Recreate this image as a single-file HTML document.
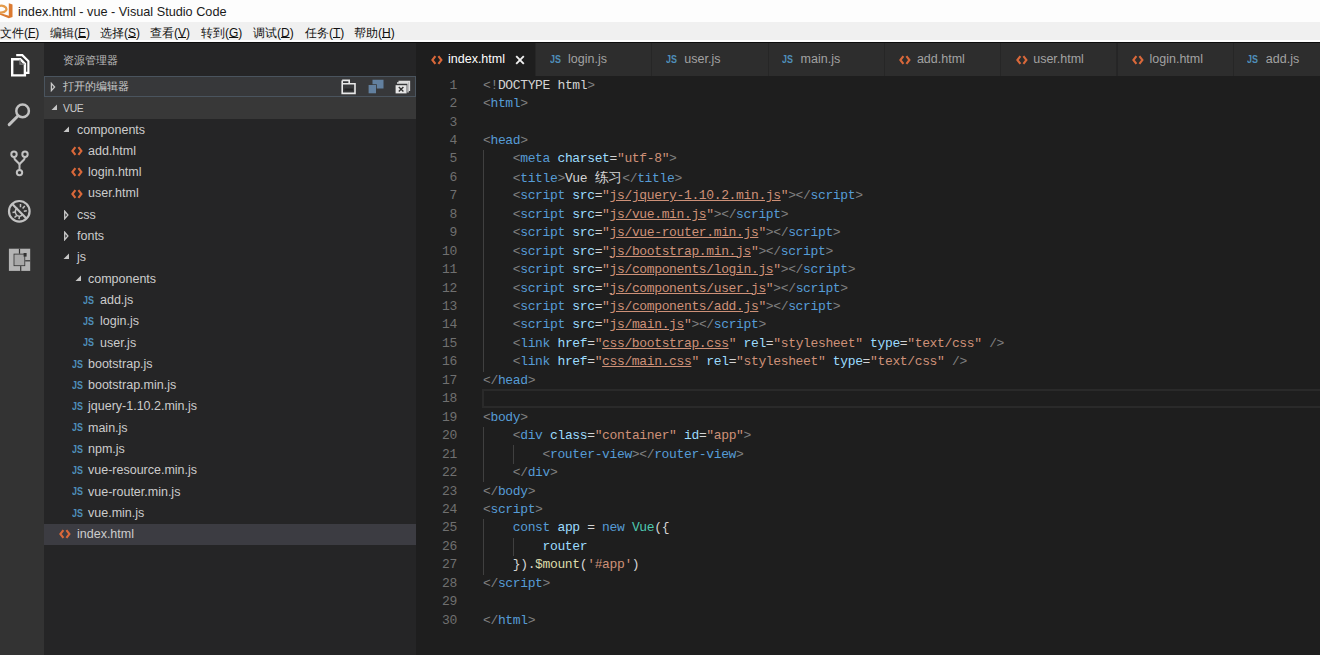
<!DOCTYPE html>
<html><head><meta charset="utf-8">
<style>
*{margin:0;padding:0;box-sizing:border-box}
html,body{width:1320px;height:655px;overflow:hidden;background:#1e1e1e;font-family:"Liberation Sans",sans-serif}
.abs{position:absolute}
#title{left:0;top:0;width:1320px;height:22px;background:#fdfdfd;color:#222}
#title .t{left:18px;top:4.5px;font-size:12.7px;white-space:nowrap;color:#1a1a1a}
#menu{left:0;top:22px;width:1320px;height:20px;background:#f0f0f0;color:#111;font-size:12px}
#menu span{position:absolute;top:3px;white-space:nowrap}
#act{left:0;top:42px;width:44px;height:613px;background:#333333}
#side{left:44px;top:42px;width:372px;height:613px;background:#252526;color:#cccccc;font-size:12.5px}
.lbl{white-space:nowrap;font-size:12.5px;color:#cccccc}
.jsi{font-size:10.5px;line-height:10px;font-weight:bold;color:#4f8fba;transform:scaleX(0.85);transform-origin:0 0}
#editor{left:416px;top:42px;width:904px;height:613px;background:#1e1e1e}
#tabs{left:0;top:0;width:904px;height:34px;background:#252526}
.tab{position:absolute;top:0;height:34px;background:#2d2d2d;color:#a0a0a0;font-size:12.5px;white-space:nowrap}
.tab .n{position:absolute;top:10px}
#code{left:0;top:34px;width:904px;height:579px;font-family:"Liberation Mono",monospace;font-size:13px;letter-spacing:-0.36px;color:#d4d4d4}
.ln{position:absolute;left:0;width:41px;text-align:right;color:#707070;line-height:18px}
.cl{position:absolute;left:67px;white-space:pre;line-height:18px}
.b{color:#808080}.tg{color:#569cd6}.at{color:#9cdcfe}.st{color:#ce9178}.kw{color:#569cd6}.cls{color:#4ec9b0}.fn{color:#dcdcaa}
.u{text-decoration:underline}
#menu u{text-underline-offset:0px;text-decoration-thickness:1px}

</style></head><body>
<div id="title" class="abs">
<svg class="abs" style="left:0;top:0" width="16" height="22" viewBox="0 0 16 22"><path d="M8.8 3.3 L12.5 4.5 V17 L8.8 18.2 L0 14.8 V13 L8.8 15.8 Z" fill="#dc7a30"/><path d="M-1 6 C3 5 6.5 7 6.5 9.2 C6.5 11.5 3 12.8 -1 12.5" fill="none" stroke="#e49a4a" stroke-width="2.3"/></svg>
<div class="t abs">index.html - vue - Visual Studio Code</div></div>
<div id="menu" class="abs">
<span style="left:0">文件(<u>F</u>)</span><span style="left:50px">编辑(<u>E</u>)</span><span style="left:100px">选择(<u>S</u>)</span><span style="left:150px">查看(<u>V</u>)</span><span style="left:201px">转到(<u>G</u>)</span><span style="left:253px">调试(<u>D</u>)</span><span style="left:305px">任务(<u>T</u>)</span><span style="left:354px">帮助(<u>H</u>)</span>
</div>
<div id="act" class="abs"><svg class="abs" style="left:0;top:0" width="44" height="240" viewBox="0 0 44 240">
<g fill="none" stroke="#ffffff" stroke-linejoin="miter">
<path d="M16.2 13.1 H22.3 L28.4 19.2 V30.9 H26" stroke-width="2.2"/>
<path d="M12.2 17.2 H20.3 L24.9 21.8 V33.4 H12.2 Z" stroke-width="2.4"/>
<path d="M20 17.5 V22.2 H24.6" stroke-width="1.2" stroke="#888"/>
</g>
<g fill="none" stroke="#c2c2c2" stroke-linecap="round">
<circle cx="22.6" cy="68.9" r="6.3" stroke-width="2.5"/>
<path d="M9.2 82.6 L17.6 74.2" stroke-width="3"/>
</g>
<g fill="none" stroke="#c2c2c2" stroke-width="2">
<circle cx="14" cy="112.3" r="2.7"/>
<circle cx="25" cy="112.3" r="2.7"/>
<circle cx="19.5" cy="130.6" r="2.7"/>
<path d="M14 115 C14 119 19.5 120 19.5 123 V127.9 M25 115 C25 119 19.5 120 19.5 123"/>
</g>
<g fill="none" stroke="#c2c2c2">
<circle cx="19.3" cy="169.3" r="10.3" stroke-width="2.2"/>
<path d="M12.5 162.3 L26.4 176.4" stroke-width="2.2"/>
<path d="M17.5 166.2 C15 167 14.5 171 16.5 173 C18.5 175 21.5 174.5 22.5 172.2" stroke-width="1.6"/>
<path d="M20.5 162 V165.3 M24.8 164 L22.6 166.5 M26.8 168.8 L23.8 169.3 M12.5 170.5 L15.2 170 M14.5 175.5 L16.6 173.6 M19 177.2 L19.4 174.6" stroke-width="1.5"/>
</g>
<g>
<rect x="8.9" y="206.7" width="21.3" height="22.2" fill="#b4b4b4"/>
<rect x="13.6" y="211.7" width="11.6" height="12.4" fill="#333333"/>
<rect x="14.4" y="212.5" width="10" height="10.8" fill="#a8a8a8"/>
<rect x="18.9" y="206.7" width="1.2" height="5" fill="#333333"/>
<rect x="20.1" y="224.1" width="1.2" height="4.8" fill="#333333"/>
<rect x="25.2" y="218.2" width="5" height="1.2" fill="#333333"/>
<rect x="23.6" y="211" width="3" height="3.6" fill="#333333"/>
</g>
</svg></div>
<div id="side" class="abs"><div class="abs" style="left:19px;top:11.5px;font-size:10.8px;color:#bbbbbb">资源管理器</div><div class="abs" style="left:0;top:34px;width:372px;height:21px;background:#37383a;border:1px solid #4a545e"></div><svg class="abs" style="left:6px;top:39.5px" width="7" height="10" viewBox="0 0 7 10"><path d="M1.4 1.4 L4.6 5 L1.4 8.6 Z" fill="none" stroke="#c8c8c8" stroke-width="1.3"/></svg><div class="abs" style="left:19px;top:37.5px;font-size:10.8px;color:#cccccc">打开的编辑器</div><svg class="abs" style="left:290px;top:34px" width="82" height="22" viewBox="0 0 82 22">
<g fill="none" stroke="#e8e8e8" stroke-width="1.6">
<path d="M8.2 4.4 H15.2 V7.8 M8.2 4.4 V17.4 H21 V7.8 H8.2"/>
<path d="M10.5 13.5 H19" stroke="#222" stroke-width="2"/>
</g>
<g fill="#62809f">
<path d="M34.6 9 H42 V17.3 H34.6 Z"/><path d="M38.5 3.8 H49.5 V12.5 H42.8 V8.2 H38.5 Z"/>
</g>
<g>
<path d="M64.5 5.5 H75.5 V15 M63 7 H74 V16.5" fill="none" stroke="#dddddd" stroke-width="1.3"/>
<rect x="61.6" y="9.2" width="11" height="8.2" fill="#e6e6e6"/>
<path d="M64.8 11 L69.4 15.6 M69.4 11 L64.8 15.6" stroke="#333" stroke-width="1.4"/>
</g>
</svg><div class="abs" style="left:0;top:55px;width:372px;height:22px;background:#383838"></div><svg class="abs" style="left:6.8px;top:62.3px" width="7" height="7" viewBox="0 0 7 7"><path d="M6 0.5 L6 6 L0.5 6 Z" fill="#c5c5c5"/></svg><div class="abs" style="left:19px;top:61px;font-size:10.4px;letter-spacing:-0.3px;color:#cccccc">VUE</div><svg class="abs" style="left:18.8px;top:83.6px" width="7" height="7" viewBox="0 0 7 7"><path d="M6 0.5 L6 6 L0.5 6 Z" fill="#c5c5c5"/></svg><div class="abs lbl" style="left:33px;top:80.50px">components</div><svg class="abs" style="left:27px;top:104.0px" width="12" height="10" viewBox="0 0 12 10"><path d="M4.4 1.2 L1.4 5 L4.4 8.8 M7.4 1.2 L10.4 5 L7.4 8.8" fill="none" stroke="#d9683a" stroke-width="2.1"/></svg><div class="abs lbl" style="left:44px;top:101.80px">add.html</div><svg class="abs" style="left:27px;top:125.3px" width="12" height="10" viewBox="0 0 12 10"><path d="M4.4 1.2 L1.4 5 L4.4 8.8 M7.4 1.2 L10.4 5 L7.4 8.8" fill="none" stroke="#d9683a" stroke-width="2.1"/></svg><div class="abs lbl" style="left:44px;top:123.10px">login.html</div><svg class="abs" style="left:27px;top:146.6px" width="12" height="10" viewBox="0 0 12 10"><path d="M4.4 1.2 L1.4 5 L4.4 8.8 M7.4 1.2 L10.4 5 L7.4 8.8" fill="none" stroke="#d9683a" stroke-width="2.1"/></svg><div class="abs lbl" style="left:44px;top:144.40px">user.html</div><svg class="abs" style="left:19px;top:167.5px" width="7" height="10" viewBox="0 0 7 10"><path d="M1.7 1.3 L4.9 5 L1.7 8.7 Z" fill="none" stroke="#c8c8c8" stroke-width="1.3"/></svg><div class="abs lbl" style="left:33px;top:165.70px">css</div><svg class="abs" style="left:19px;top:188.8px" width="7" height="10" viewBox="0 0 7 10"><path d="M1.7 1.3 L4.9 5 L1.7 8.7 Z" fill="none" stroke="#c8c8c8" stroke-width="1.3"/></svg><div class="abs lbl" style="left:33px;top:187.00px">fonts</div><svg class="abs" style="left:18.8px;top:211.4px" width="7" height="7" viewBox="0 0 7 7"><path d="M6 0.5 L6 6 L0.5 6 Z" fill="#c5c5c5"/></svg><div class="abs lbl" style="left:33px;top:208.30px">js</div><svg class="abs" style="left:30.6px;top:232.7px" width="7" height="7" viewBox="0 0 7 7"><path d="M6 0.5 L6 6 L0.5 6 Z" fill="#c5c5c5"/></svg><div class="abs lbl" style="left:44px;top:229.60px">components</div><div class="abs jsi" style="left:38.9px;top:252.6px">JS</div><div class="abs lbl" style="left:56px;top:250.90px">add.js</div><div class="abs jsi" style="left:38.9px;top:273.90000000000003px">JS</div><div class="abs lbl" style="left:56px;top:272.20px">login.js</div><div class="abs jsi" style="left:38.9px;top:295.2px">JS</div><div class="abs lbl" style="left:56px;top:293.50px">user.js</div><div class="abs jsi" style="left:27.5px;top:316.5px">JS</div><div class="abs lbl" style="left:44px;top:314.80px">bootstrap.js</div><div class="abs jsi" style="left:27.5px;top:337.8px">JS</div><div class="abs lbl" style="left:44px;top:336.10px">bootstrap.min.js</div><div class="abs jsi" style="left:27.5px;top:359.1px">JS</div><div class="abs lbl" style="left:44px;top:357.40px">jquery-1.10.2.min.js</div><div class="abs jsi" style="left:27.5px;top:380.4px">JS</div><div class="abs lbl" style="left:44px;top:378.70px">main.js</div><div class="abs jsi" style="left:27.5px;top:401.7px">JS</div><div class="abs lbl" style="left:44px;top:400.00px">npm.js</div><div class="abs jsi" style="left:27.5px;top:423.0px">JS</div><div class="abs lbl" style="left:44px;top:421.30px">vue-resource.min.js</div><div class="abs jsi" style="left:27.5px;top:444.3px">JS</div><div class="abs lbl" style="left:44px;top:442.60px">vue-router.min.js</div><div class="abs jsi" style="left:27.5px;top:465.6px">JS</div><div class="abs lbl" style="left:44px;top:463.90px">vue.min.js</div><div class="abs" style="left:0;top:481.70px;width:372px;height:21.3px;background:#3c3c42"></div><svg class="abs" style="left:14.7px;top:487.4px" width="12" height="10" viewBox="0 0 12 10"><path d="M4.4 1.2 L1.4 5 L4.4 8.8 M7.4 1.2 L10.4 5 L7.4 8.8" fill="none" stroke="#d9683a" stroke-width="2.1"/></svg><div class="abs lbl" style="left:33px;top:485.20px">index.html</div></div>
<div class="abs" style="left:0;top:40px;width:1320px;height:2px;background:#fdfdfd;z-index:5"></div><div class="abs" style="left:0;top:42px;width:1320px;height:1px;background:#0c0c0c;z-index:5"></div>
<div id="editor" class="abs">
<div id="tabs" class="abs"><div class="tab" style="left:0.0px;width:120.0px;background:#1e1e1e;color:#ffffff;border-right:1px solid #262626"><svg class="abs" style="left:14.5px;top:12.7px" width="12" height="10" viewBox="0 0 12 10"><path d="M4.4 1.2 L1.4 5 L4.4 8.8 M7.4 1.2 L10.4 5 L7.4 8.8" fill="none" stroke="#d9683a" stroke-width="2.1"/></svg><div class="n" style="left:32px">index.html</div><svg class="abs" style="left:99px;top:12.5px" width="10" height="10" viewBox="0 0 10 10"><path d="M1.2 1.2 L8.8 8.8 M8.8 1.2 L1.2 8.8" stroke="#f0f0f0" stroke-width="1.9"/></svg></div><div class="tab" style="left:120.0px;width:116.3px;background:#2d2d2d;color:#a2a2a2;border-right:1px solid #262626"><div class="abs jsi" style="left:13.5px;top:12.2px">JS</div><div class="n" style="left:32px">login.js</div></div><div class="tab" style="left:236.3px;width:116.3px;background:#2d2d2d;color:#a2a2a2;border-right:1px solid #262626"><div class="abs jsi" style="left:13.5px;top:12.2px">JS</div><div class="n" style="left:32px">user.js</div></div><div class="tab" style="left:352.6px;width:116.3px;background:#2d2d2d;color:#a2a2a2;border-right:1px solid #262626"><div class="abs jsi" style="left:13.5px;top:12.2px">JS</div><div class="n" style="left:32px">main.js</div></div><div class="tab" style="left:468.9px;width:116.3px;background:#2d2d2d;color:#a2a2a2;border-right:1px solid #262626"><svg class="abs" style="left:14.5px;top:12.7px" width="12" height="10" viewBox="0 0 12 10"><path d="M4.4 1.2 L1.4 5 L4.4 8.8 M7.4 1.2 L10.4 5 L7.4 8.8" fill="none" stroke="#d9683a" stroke-width="2.1"/></svg><div class="n" style="left:32px">add.html</div></div><div class="tab" style="left:585.2px;width:116.3px;background:#2d2d2d;color:#a2a2a2;border-right:1px solid #262626"><svg class="abs" style="left:14.5px;top:12.7px" width="12" height="10" viewBox="0 0 12 10"><path d="M4.4 1.2 L1.4 5 L4.4 8.8 M7.4 1.2 L10.4 5 L7.4 8.8" fill="none" stroke="#d9683a" stroke-width="2.1"/></svg><div class="n" style="left:32px">user.html</div></div><div class="tab" style="left:701.5px;width:116.3px;background:#2d2d2d;color:#a2a2a2;border-right:1px solid #262626"><svg class="abs" style="left:14.5px;top:12.7px" width="12" height="10" viewBox="0 0 12 10"><path d="M4.4 1.2 L1.4 5 L4.4 8.8 M7.4 1.2 L10.4 5 L7.4 8.8" fill="none" stroke="#d9683a" stroke-width="2.1"/></svg><div class="n" style="left:32px">login.html</div></div><div class="tab" style="left:817.8px;width:116.3px;background:#2d2d2d;color:#a2a2a2;border-right:1px solid #262626"><div class="abs jsi" style="left:13.5px;top:12.2px">JS</div><div class="n" style="left:32px">add.js</div></div></div>
<div id="code" class="abs"><div class="abs" style="left:66px;top:312.75px;width:840px;height:19px;border:2px solid #2a2a2a"></div><div class="abs" style="left:67.0px;top:74.20px;width:1px;height:221.40px;background:#404040"></div><div class="abs" style="left:67.0px;top:350.95px;width:1px;height:55.35px;background:#404040"></div><div class="abs" style="left:96.8px;top:369.40px;width:1px;height:18.45px;background:#404040"></div><div class="abs" style="left:67.0px;top:443.20px;width:1px;height:55.35px;background:#404040"></div><div class="abs" style="left:96.8px;top:461.65px;width:1px;height:18.45px;background:#404040"></div><div class="ln" style="top:0.60px">1</div><div class="cl" style="top:0.60px"><span class="b">&lt;</span><span class="b">!</span>DOCTYPE html<span class="b">&gt;</span></div><div class="ln" style="top:19.05px">2</div><div class="cl" style="top:19.05px"><span class="b">&lt;</span><span class="tg">html</span><span class="b">&gt;</span></div><div class="ln" style="top:37.50px">3</div><div class="ln" style="top:55.95px">4</div><div class="cl" style="top:55.95px"><span class="b">&lt;</span><span class="tg">head</span><span class="b">&gt;</span></div><div class="ln" style="top:74.40px">5</div><div class="cl" style="top:74.40px">    <span class="b">&lt;</span><span class="tg">meta</span> <span class="at">charset</span>=<span class="st">"utf-8"</span><span class="b">&gt;</span></div><div class="ln" style="top:92.85px">6</div><div class="cl" style="top:92.85px">    <span class="b">&lt;</span><span class="tg">title</span><span class="b">&gt;</span>Vue <span style="letter-spacing:-0.2px;font-size:14px">练习</span><span class="b">&lt;/</span><span class="tg">title</span><span class="b">&gt;</span></div><div class="ln" style="top:111.30px">7</div><div class="cl" style="top:111.30px">    <span class="b">&lt;</span><span class="tg">script</span> <span class="at">src</span>=<span class="st">"<span class="u">js/jquery-1.10.2.min.js</span>"</span><span class="b">&gt;&lt;/</span><span class="tg">script</span><span class="b">&gt;</span></div><div class="ln" style="top:129.75px">8</div><div class="cl" style="top:129.75px">    <span class="b">&lt;</span><span class="tg">script</span> <span class="at">src</span>=<span class="st">"<span class="u">js/vue.min.js</span>"</span><span class="b">&gt;&lt;/</span><span class="tg">script</span><span class="b">&gt;</span></div><div class="ln" style="top:148.20px">9</div><div class="cl" style="top:148.20px">    <span class="b">&lt;</span><span class="tg">script</span> <span class="at">src</span>=<span class="st">"<span class="u">js/vue-router.min.js</span>"</span><span class="b">&gt;&lt;/</span><span class="tg">script</span><span class="b">&gt;</span></div><div class="ln" style="top:166.65px">10</div><div class="cl" style="top:166.65px">    <span class="b">&lt;</span><span class="tg">script</span> <span class="at">src</span>=<span class="st">"<span class="u">js/bootstrap.min.js</span>"</span><span class="b">&gt;&lt;/</span><span class="tg">script</span><span class="b">&gt;</span></div><div class="ln" style="top:185.10px">11</div><div class="cl" style="top:185.10px">    <span class="b">&lt;</span><span class="tg">script</span> <span class="at">src</span>=<span class="st">"<span class="u">js/components/login.js</span>"</span><span class="b">&gt;&lt;/</span><span class="tg">script</span><span class="b">&gt;</span></div><div class="ln" style="top:203.55px">12</div><div class="cl" style="top:203.55px">    <span class="b">&lt;</span><span class="tg">script</span> <span class="at">src</span>=<span class="st">"<span class="u">js/components/user.js</span>"</span><span class="b">&gt;&lt;/</span><span class="tg">script</span><span class="b">&gt;</span></div><div class="ln" style="top:222.00px">13</div><div class="cl" style="top:222.00px">    <span class="b">&lt;</span><span class="tg">script</span> <span class="at">src</span>=<span class="st">"<span class="u">js/components/add.js</span>"</span><span class="b">&gt;&lt;/</span><span class="tg">script</span><span class="b">&gt;</span></div><div class="ln" style="top:240.45px">14</div><div class="cl" style="top:240.45px">    <span class="b">&lt;</span><span class="tg">script</span> <span class="at">src</span>=<span class="st">"<span class="u">js/main.js</span>"</span><span class="b">&gt;&lt;/</span><span class="tg">script</span><span class="b">&gt;</span></div><div class="ln" style="top:258.90px">15</div><div class="cl" style="top:258.90px">    <span class="b">&lt;</span><span class="tg">link</span> <span class="at">href</span>=<span class="st">"<span class="u">css/bootstrap.css</span>"</span> <span class="at">rel</span>=<span class="st">"stylesheet"</span> <span class="at">type</span>=<span class="st">"text/css"</span> <span class="b">/&gt;</span></div><div class="ln" style="top:277.35px">16</div><div class="cl" style="top:277.35px">    <span class="b">&lt;</span><span class="tg">link</span> <span class="at">href</span>=<span class="st">"<span class="u">css/main.css</span>"</span> <span class="at">rel</span>=<span class="st">"stylesheet"</span> <span class="at">type</span>=<span class="st">"text/css"</span> <span class="b">/&gt;</span></div><div class="ln" style="top:295.80px">17</div><div class="cl" style="top:295.80px"><span class="b">&lt;/</span><span class="tg">head</span><span class="b">&gt;</span></div><div class="ln" style="top:314.25px">18</div><div class="ln" style="top:332.70px">19</div><div class="cl" style="top:332.70px"><span class="b">&lt;</span><span class="tg">body</span><span class="b">&gt;</span></div><div class="ln" style="top:351.15px">20</div><div class="cl" style="top:351.15px">    <span class="b">&lt;</span><span class="tg">div</span> <span class="at">class</span>=<span class="st">"container"</span> <span class="at">id</span>=<span class="st">"app"</span><span class="b">&gt;</span></div><div class="ln" style="top:369.60px">21</div><div class="cl" style="top:369.60px">        <span class="b">&lt;</span><span class="tg">router-view</span><span class="b">&gt;&lt;/</span><span class="tg">router-view</span><span class="b">&gt;</span></div><div class="ln" style="top:388.05px">22</div><div class="cl" style="top:388.05px">    <span class="b">&lt;/</span><span class="tg">div</span><span class="b">&gt;</span></div><div class="ln" style="top:406.50px">23</div><div class="cl" style="top:406.50px"><span class="b">&lt;/</span><span class="tg">body</span><span class="b">&gt;</span></div><div class="ln" style="top:424.95px">24</div><div class="cl" style="top:424.95px"><span class="b">&lt;</span><span class="tg">script</span><span class="b">&gt;</span></div><div class="ln" style="top:443.40px">25</div><div class="cl" style="top:443.40px">    <span class="kw">const</span> <span class="at">app</span> = <span class="kw">new</span> <span class="cls">Vue</span>({</div><div class="ln" style="top:461.85px">26</div><div class="cl" style="top:461.85px">        <span class="at">router</span></div><div class="ln" style="top:480.30px">27</div><div class="cl" style="top:480.30px">    }).<span class="fn">$mount</span>(<span class="st">'#app'</span>)</div><div class="ln" style="top:498.75px">28</div><div class="cl" style="top:498.75px"><span class="b">&lt;/</span><span class="tg">script</span><span class="b">&gt;</span></div><div class="ln" style="top:517.20px">29</div><div class="ln" style="top:535.65px">30</div><div class="cl" style="top:535.65px"><span class="b">&lt;/</span><span class="tg">html</span><span class="b">&gt;</span></div></div>
</div>
</body></html>
